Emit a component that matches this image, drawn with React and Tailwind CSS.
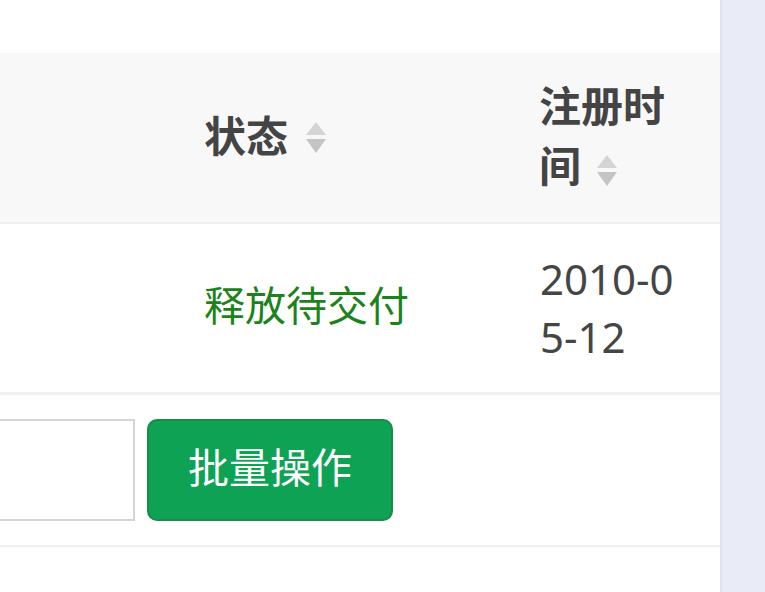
import React from 'react';

const font = { fontFamily: '"Roboto", "Noto Sans CJK SC", sans-serif' };

function SortIcon() {
  return (
    <svg width="22" height="31" viewBox="0 0 22 31" className="shrink-0">
      <path d="M11 0 L21 13 L1 13 Z" fill="#d4d4d4" />
      <path d="M1 17 L21 17 L11 31 Z" fill="#c4c4c4" />
    </svg>
  );
}

export default function App() {
  return (
    <div className="flex w-[765px] h-[592px] overflow-hidden bg-white" style={font}>
      <main className="w-[720px] shrink-0 pt-[53px] overflow-hidden">
        {/* header */}
        <div className="grid grid-cols-[166px_335px_219px] h-[171px] bg-[#f8f8f8] border-b-2 border-[#eeeeee]">
          <div />
          <div className="pl-[38px] flex items-center gap-[17px] text-[42px] font-bold text-[#444]">
            <span className="leading-none">状态</span>
            <SortIcon />
          </div>
          <div className="pl-[38px] pr-[30px] flex items-center text-[42px] font-bold text-[#444] leading-[60px]">
            <div>
              注册时
              <span className="inline-flex items-center gap-[15px]">
                间
                <span className="inline-block align-middle translate-y-[3px]"><SortIcon /></span>
              </span>
            </div>
          </div>
        </div>

        {/* data row */}
        <div className="grid grid-cols-[166px_335px_219px] h-[171px] border-b-[3px] border-[#f0f0f0]">
          <div />
          <div className="pl-[38px] flex items-center text-[41px] text-[#1c821c]">释放待交付</div>
          <div className="pl-[39px] pr-[28px] flex items-center text-[42px] text-[#454545] leading-[58px] break-all" style={{ fontFamily: '"Noto Sans", "Noto Sans CJK SC", sans-serif' }}>
            2010-05-12
          </div>
        </div>

        {/* footer */}
        <div className="flex items-center gap-[12px] h-[152px] border-b-2 border-[#f0f0f0]">
          <div className="w-[135px] h-[102px] border-2 border-l-0 border-[#d5d5d5] bg-white" />
          <button className="w-[246px] h-[102px] rounded-[10px] border-2 border-[#178d47] bg-[#0ea354] text-white text-[41px] flex items-center justify-center">
            批量操作
          </button>
        </div>
      </main>
      <aside className="flex-1 bg-[#e9ecf6] border-l-2 border-[#e0e3ea]" />
    </div>
  );
}
